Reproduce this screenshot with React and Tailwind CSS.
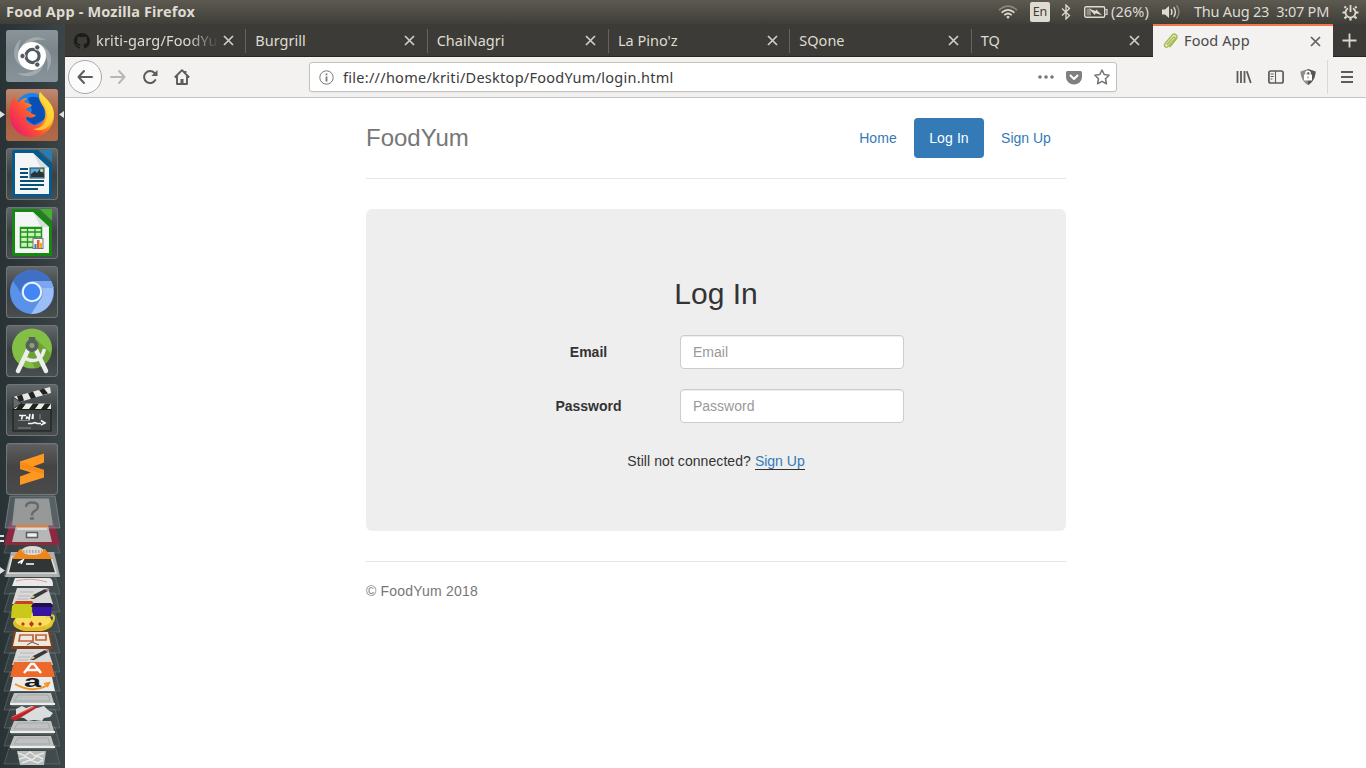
import React from "react";

const ui = "font-['Noto_Sans','Open_Sans',sans-serif]";

function CloseIcon({ className }) {
  return (
    <svg className={`h-[11px] w-[11px] shrink-0 ${className}`} viewBox="0 0 11 11" fill="none" stroke="currentColor" strokeWidth="1.7">
      <path d="M1 1l9 9M10 1l-9 9" />
    </svg>
  );
}

/* ---------- system bar ---------- */

function SystemBar() {
  return (
    <header className="flex h-6 shrink-0 items-center bg-linear-to-b from-[#5c5a50] to-[#3f3e39] text-[#dfdbd2]">
      <span className="ml-[6px] pb-[2px] whitespace-nowrap text-[14.5px] font-bold leading-[22px] tracking-[0.17px]">Food App - Mozilla Firefox</span>
      <div className="ml-auto flex h-6 items-center">
        <svg className="h-[18px] w-5" viewBox="0 0 20 18" fill="none" stroke="#dfdbd2" strokeWidth="1.7">
          <path d="M1 7.2Q10-.8 19 7.2" stroke="#8b887f" />
          <path d="M3.6 9.7Q10 4 16.4 9.7M6.3 12.2Q10 8.8 13.7 12.2" />
          <path d="M8.2 13.7Q10 12.2 11.8 13.7L10 16z" fill="#dfdbd2" stroke="none" />
        </svg>
        <span className="ml-3 flex h-5 w-5 items-center justify-center rounded-[2px] bg-[#dfdbd2] pt-px text-[12.5px] leading-none text-[#3c3b37]">En</span>
        <svg className="ml-[11px] h-4 w-[10px]" viewBox="0 0 10 16" fill="none" stroke="#dfdbd2" strokeWidth="1.3">
          <path d="M1 4.5l7.5 7L5 15V1l3.5 3.5L1 11.5" />
        </svg>
        <svg className="ml-[13px] h-3 w-6" viewBox="0 0 24 12" fill="none">
          <rect x=".7" y=".7" width="20" height="10.6" rx="1.5" stroke="#dfdbd2" strokeWidth="1.4" />
          <rect x="2.5" y="2.5" width="4.500" height="7" fill="#8f8c83" />
          <path d="M21.5 3.5H23v5h-1.500" stroke="#dfdbd2" strokeWidth="1.2" />
          <path d="M5 2.700l6.500 2.300.8-1.500L18 9.300l-6.300-2-1 1.600z" fill="#dfdbd2" />
        </svg>
        <span className="ml-[3px] w-[39px] pb-[2px] whitespace-nowrap text-[14.5px] leading-[22px] tracking-[0.1px]">(26%)</span>
        <svg className="ml-[11px] h-4 w-5" viewBox="0 0 20 16" fill="none" stroke="#dfdbd2" strokeWidth="1.4">
          <path d="M1 5.500h3L8 2v12L4 10.500H1z" fill="#dfdbd2" stroke="none" />
          <path d="M10 5.200Q12 8 10 10.800M12.700 3.200Q16 8 12.700 12.800" />
          <path d="M15.500 1.500Q20.500 8 15.500 14.500" stroke="#8b887f" />
        </svg>
        <span className="ml-[13px] w-[143px] pb-[2px] whitespace-pre text-[14.5px] leading-[22px] tracking-[-0.22px]">Thu Aug 23  3:07 PM</span>
        <svg className="mr-[7px] ml-[5px] h-[17px] w-[17px]" viewBox="0 0 17 17" fill="none" stroke="#dfdbd2">
          <path d="M6 4.200A5 5 0 1 0 11 4.200" strokeWidth="1.800" />
          <path d="M8.500 1v7" strokeWidth="1.800" />
          <path d="M3.900 3.900L2.500 2.500M13.100 3.900l1.400-1.400M3.500 8.500h-3M13.500 8.500h3M4.500 12.500l-2 2M12.500 12.500l2 2M8.500 13.500v3" strokeWidth="2.200" />
        </svg>
      </div>
    </header>
  );
}

/* ---------- launcher ---------- */

function UbuntuIcon() {
  return (
    <svg viewBox="0 0 52 52" className="h-full w-full">
      <defs>
        <linearGradient id="dash" x1="0" y1="0" x2="0" y2="1">
          <stop offset="0" stopColor="#8b9599" />
          <stop offset=".4" stopColor="#7b868c" />
          <stop offset="1" stopColor="#87939a" />
        </linearGradient>
      </defs>
      <rect width="52" height="52" rx="3" fill="url(#dash)" />
      <path d="M13 24C15 10 29 3 40 10 23 8 18 17 18 27zM21 39C6 34 4 18 15 9 9 25 15 32 24 36zM38 28C39 43 25 51 11 43 27 45 33 38 34 30zM28 13C44 15 50 29 41 42 44 26 37 20 28 18z" fill="#c0c7ca" opacity=".5" />
      <circle cx="26" cy="26" r="14" fill="#fff" />
      <circle cx="26.500" cy="26" r="6.600" fill="none" stroke="#505a5f" strokeWidth="3.200" />
      <g fill="#505a5f" stroke="#fff" strokeWidth="1">
        <circle cx="16.500" cy="26" r="2.700" />
        <circle cx="31.300" cy="17.400" r="2.700" />
        <circle cx="31.300" cy="34.600" r="2.700" />
      </g>
    </svg>
  );
}

function FirefoxIcon() {
  return (
    <svg viewBox="0 0 52 52" className="h-full w-full">
      <defs>
        <linearGradient id="fxBody" x1=".95" y1=".1" x2=".1" y2=".75">
          <stop offset="0" stopColor="#fff33c" />
          <stop offset=".35" stopColor="#ffa51c" />
          <stop offset=".6" stopColor="#ff5a2c" />
          <stop offset="1" stopColor="#f02660" />
        </linearGradient>
        <linearGradient id="fxTile" x1="0" y1="0" x2="0" y2="1">
          <stop offset="0" stopColor="#bf8a72" />
          <stop offset=".5" stopColor="#a9603f" />
          <stop offset="1" stopColor="#b06b4b" />
        </linearGradient>
      </defs>
      <rect width="52" height="52" rx="3" fill="url(#fxTile)" />
      <circle cx="26" cy="21" r="17" fill="#1a83ee" />
      <path d="M22 9Q33 5 38 14L39 30 28 36 20 30 26 22z" fill="#0a4fb5" />
      <path d="M34 3C31 9 35 14 38 19 42 27 37 36 29 36 23 36 19 32 20 27 24 30 28 29 30 26 26 26 24 22 20 21 20 18 24 18 26 17 26 15 21 14 18 13 19 11 21 10 21 9 17 9 14 11 13 13L10 12C9 10 9 9 10 7 4 12 3 20 4 28 5 40 14 48 26 48 39 48 48 38 48 26 48 16 42 12 34 3z" fill="url(#fxBody)" />
      <path d="M34 3C31 10 41 15 41 26 40 36 33 40 27 40 37 44 45 38 47.500 28 49 15 40 11 34 3z" fill="#ffdc3c" opacity=".75" />
    </svg>
  );
}

function DocumentIcon({ kind }) {
  const writer = kind === "writer";
  const edge = writer ? "#075a8d" : "#168710";
  const fold = writer ? "#287db5" : "#43b32f";
  return (
    <svg viewBox="0 0 52 52" className="h-full w-full">
      <path d="M8 2H32L46 16V49H8Q6 49 6 47V4Q6 2 8 2z" fill={edge} />
      <path d="M9 5H27L43 20V46H9z" fill="#f4f6f6" />
      <path d="M34 2H45Q46 2 46 3V14z" fill={fold} />
      <path d="M27 5l16 15h-8z" fill="#d9dddd" />
      {writer ? (
        <g>
          <path d="M14 21h8M14 25h8M14 29h8M14 33h24M14 37h24M14 41h18" stroke="#075077" strokeWidth="2" />
          <rect x="24" y="20" width="14" height="10" fill="#59aee0" stroke="#254356" />
          <path d="M25 29v-3l4-3 2 2 3-4 4 5v3z" fill="#27353b" />
          <circle cx="35.500" cy="22.500" r="1.500" fill="#f2d75b" />
        </g>
      ) : (
        <g>
          <rect x="14.500" y="20.500" width="21" height="20" fill="#cbf1bd" stroke="#209319" strokeWidth="1.500" />
          <path d="M14 21h22" stroke="#209319" strokeWidth="2" />
          <path d="M14 25h22M14 30h22M14 35h22M21.500 20v20M29 20v20" stroke="#209319" strokeWidth="1.300" />
          <rect x="27" y="31.500" width="10" height="10" fill="#f2f2f2" stroke="#777" />
          <path d="M28.500 37h2v4h-2z" fill="#2d81bd" />
          <path d="M31 33h2.500v8H31z" fill="#df6622" />
          <path d="M34 36h2v5h-2z" fill="#eaac25" />
        </g>
      )}
    </svg>
  );
}

function ChromiumIcon() {
  return (
    <svg viewBox="0 0 52 52" className="h-full w-full">
      <circle cx="26" cy="26" r="22" fill="#5b92e9" />
      <path d="M7 15A22 22 0 0 1 45 15H26Q15 16 15 27z" fill="#3f70c6" />
      <path d="M26 15H45C52 29 44 48 25 48L36 31Q39 18 26 15z" fill="#9cbef8" />
      <path d="M26 15H45l3 7H33z" fill="#7ca7ef" />
      <circle cx="26" cy="26" r="9.200" fill="#4285f4" stroke="#eef4ff" strokeWidth="2" />
    </svg>
  );
}

function AndroidStudioIcon() {
  return (
    <svg viewBox="0 0 52 52" className="h-full w-full">
      <circle cx="26" cy="23.500" r="20" fill="#83bf45" />
      <path d="M29 13l16.500 16Q41 42 29 43L20 27z" fill="#6ca235" />
      <path d="M18 33Q34 41 38.500 24" fill="none" stroke="#eceeed" strokeWidth="3.500" />
      <path d="M22 25L12 46M30 25l10 21" stroke="#eceeed" strokeWidth="4.500" strokeLinecap="round" />
      <circle cx="26" cy="20.500" r="4.500" fill="none" stroke="#56615d" strokeWidth="4" />
      <path d="M22.800 12h6.400v5h-6.400z" fill="#56615d" />
      <circle cx="26" cy="20.500" r="2.300" fill="#8fa07c" />
    </svg>
  );
}

function ClapperIcon() {
  return (
    <svg viewBox="0 0 52 52" className="h-full w-full">
      <path d="M7 13L44 3l1 6L10 19z" fill="#e7e7e3" />
      <path d="M11 12l5-1.500 2 6-5 1.500zM22 9l5-1.500 3 6-5 1.500zM33 6l5-1.500 4 5-5 1.500z" fill="#202322" />
      <path d="M7 19.500h38V25H7z" fill="#ecece7" />
      <path d="M14 19.500h6L16 25h-6zM27 19.500h6L29 25h-6zM39 19.500h6L41 25h-6z" fill="#202322" />
      <path d="M7 13l9 6-9 6z" fill="#656b6c" stroke="#2c3030" />
      <rect x="7" y="25.500" width="38" height="21.500" fill="#414545" stroke="#171919" />
      <path d="M13 31.500h7M16.500 31.500l-1 4M20 35l1-2 2 2 1-5-1 5M26 35l1-5v5M22 39.500h4l3-1 2 1h4M35 36.500l4 2.500-4 2" stroke="#f5f5f5" fill="none" strokeWidth="1.600" />
      <path d="M12 36.500h12M12 44h13M34 30v5" stroke="#858b8b" />
    </svg>
  );
}

function SublimeIcon() {
  return (
    <svg viewBox="0 0 52 52" className="h-full w-full">
      <defs>
        <linearGradient id="sublimeTile" x1="0" y1="0" x2="0" y2="1">
          <stop offset="0" stopColor="#5d5d5d" />
          <stop offset=".45" stopColor="#444" />
          <stop offset="1" stopColor="#4a4a4a" />
        </linearGradient>
      </defs>
      <rect x="2" y="2" width="48" height="48" rx="3" fill="url(#sublimeTile)" />
      <path d="M14 18.500L38 10.500v9L27 23.500l11 3.500v7.500L14 42v-8.500l11-4-11-3.500z" fill="#ff9820" />
      <path d="M14 18.500l13 5 11 3.500v4l-24-6z" fill="#f58c16" />
    </svg>
  );
}

const apps = [
  [UbuntuIcon], [FirefoxIcon], [DocumentIcon, "writer"], [DocumentIcon, "calc"],
  [ChromiumIcon], [AndroidStudioIcon], [ClapperIcon], [SublimeIcon],
];

function Disk({ y }) {
  return (
    <g transform={`translate(0 ${y})`}>
      <path d="M14 0h37l3 10H10z" fill="#bfc1c1" />
      <path d="M18 2h30l2 6H14z" fill="none" stroke="#a5a9a9" />
      <path d="M10 10h45v2H10z" fill="#eceeee" />
      <path d="M11 12h43v1.500H11z" fill="#5f6464" />
    </g>
  );
}

function Notes({ y }) {
  return (
    <g transform={`translate(0 ${y})`}>
      <path d="M17 0h31l5 16H12z" fill="#d8d8d8" />
      <path d="M20 4h14M18 8h12M17 11h11" stroke="#b7b7b7" />
      <path d="M30 11l3-4L45 1l3 2-14 8z" fill="#353b39" />
      <path d="M30 11l3-4 2 2z" fill="#dbc98d" />
      <path d="M45 1l3-1 2 2-3 1z" fill="#b67b9b" />
    </g>
  );
}

function FoldedStack() {
  const edges = [39, 62, 80, 98, 118, 139, 158, 177, 196, 214, 232, 250];
  return (
    <svg viewBox="0 0 65 272" className="block h-[272px] w-[65px]">
      <g fill="#828b8e" fillOpacity=".14" stroke="#8c9598" strokeOpacity=".35">
        {edges.map((y) => <path key={y} d={`M10 ${y}H55l5 19H4z`} />)}
      </g>
      <path d="M10 26l-6 24h56l-6-24z" fill="#8c2940" />
      <path d="M10 1h45l5 32H5z" fill="#768085" fillOpacity=".5" stroke="#919a9e" strokeOpacity=".6" />
      <path d="M15 3.500h34l4 27H12z" fill="#979999" />
      <path d="M26 12q0-4.500 6-4.500t6 4q0 3-4 5-2 1-2 4M30 23.500h4" fill="none" stroke="#666969" strokeWidth="2.300" />
      <path d="M16 30.500h32l4 16.500H12z" fill="#b5b6b6" />
      <path d="M16 31h32" stroke="#ea7d35" strokeWidth="2" />
      <path d="M17 33h30v2H17z" fill="#d8d9d8" />
      <rect x="26.500" y="37.500" width="11" height="5" fill="#eee" stroke="#585b5c" strokeWidth="1.500" />
      <path d="M11 57h43l6 25H5z" fill="#aeb0af" />
      <path d="M12 62h39l5 16H8z" fill="#323536" stroke="#e0e0df" strokeWidth="1.500" />
      <path d="M18 68l5-3-2 4M26 69h8" fill="none" stroke="#fff" strokeWidth="1.600" />
      <path d="M20 54h25l8 10H12z" fill="#ee8619" />
      <ellipse cx="32.500" cy="55.500" rx="10.500" ry="4.500" fill="#dedbd6" />
      <path d="M23 56.500h19" stroke="#aaa" strokeWidth="3" strokeDasharray="1.500 1.500" />
      <path d="M15 83h34q4 0 4 8H12z" fill="#e9e9e9" />
      <path d="M16 86q15-4 31 1" fill="none" stroke="#d79da1" />
      <Notes y={93} />
      <ellipse cx="33" cy="128" rx="20" ry="9" fill="#dfbd24" />
      <ellipse cx="33" cy="125" rx="18" ry="7.500" fill="#f6df5a" />
      <path d="M46 122q8-4 8 1 0 6-9 9" fill="none" stroke="#e6c936" strokeWidth="2" />
      <path d="M12 111l2-2h19l-2 14H11z" fill="#c9c91a" />
      <path d="M32 111h20l-1 10H33z" fill="#3415a4" />
      <path d="M33 108h18l2 4H31z" fill="#20104a" />
      <path d="M14 109l2-3h16l2 3z" fill="#c94123" />
      <path d="M29 129l2.500-3 2.500 3-2.500 3zM21 129l2-2 2 2-2 2zM38 129l2-2 2 2-2 2z" fill="#c52e2e" />
      <path d="M14 136h36l3 18H11z" fill="#843f1d" />
      <path d="M16 137h32l3 14H13z" fill="#eee8dd" />
      <path d="M20 140h13v6H19zM36 140h10v5H36z" fill="none" stroke="#bf6037" strokeWidth="1.700" />
      <path d="M27 150l5-3 7 3" fill="none" stroke="#515653" />
      <Notes y={154} />
      <path d="M14 167h37l4 15H10z" fill="#ec692a" />
      <path d="M24 178l7-9h3l7 9M27 175h12" fill="none" stroke="#fff" strokeWidth="2.400" />
      <path d="M13 182h39l3 14H10z" fill="#ececec" />
      <text x="24" y="192" className="font-['Liberation_Sans',sans-serif] text-[16px] font-bold" textLength="17" lengthAdjust="spacingAndGlyphs" fill="#17191a">a</text>
      <path d="M15 189Q32 199 48 190M44 189l5-1-2 4" fill="none" stroke="#f59420" strokeWidth="2" />
      <Disk y={198} />
      <Disk y={226} />
      <path d="M16 214l6-3 4 2 6-2 5 2 7-2 4 4 5 3-3 4-6 1-2 3-8-1-6 1-4-3-8-1z" fill="#dadddd" />
      <path d="M10 223L34 211l4 1-23 14z" fill="#bd2425" />
      <path d="M12 222l22-10" stroke="#eb655d" />
      <Disk y={241} />
      <path d="M17 256h29l-2 14H20z" fill="#b9bdbb" />
      <path d="M18 258l7 3 5-4 5 4 9-3M19 264l7-2 6 3 5-4 6 3M22 268l8-3 8 3 5-3" fill="none" stroke="#e6e8e6" strokeWidth="1.500" />
    </svg>
  );
}

function Launcher() {
  return (
    <aside className="relative flex w-[65px] shrink-0 flex-col overflow-hidden bg-linear-to-r from-[#293235] via-[#303a3d] to-[#3c4649] pt-[6px]">
      <div className="flex flex-col items-start gap-[7px] pl-[6px]">
        {apps.map(([Icon, kind], i) => (
          <div key={i} className="relative h-[52px] w-[52px] rounded-[4px] bg-linear-to-b from-[#63686a] via-[#3b4042] to-[#494f51] shadow-[inset_0_0_0_1px_#6f7678]">
            <Icon kind={kind} />
          </div>
        ))}
      </div>
      <FoldedStack />
      <svg className="absolute top-0 left-0 h-[744px] w-[65px]" viewBox="0 0 65 744" fill="#e0e0df">
        <path d="M0 87l5 3.500L0 94zM64 87l-5 3.500 5 3.500zM0 543l5 3.500L0 550z" />
        <path d="M0 511h4v2H0zM0 516h4v2H0z" />
      </svg>
    </aside>
  );
}

/* ---------- browser ---------- */

const tabs = [
  { title: "kriti-garg/FoodYu", github: true },
  { title: "Burgrill" },
  { title: "ChaiNagri" },
  { title: "La Pino'z" },
  { title: "SQone" },
  { title: "TQ" },
];

function TabStrip() {
  return (
    <div className="flex h-[33px] shrink-0 border-b border-[#272622] bg-[#3c3b37] text-[14.5px] text-[#dfdbd2]">
      <div className="grid w-[1088px] grid-cols-6">
        {tabs.map((t, i) => (
          <div key={t.title} className="relative flex min-w-0 items-center pt-px pr-[12.5px] pl-[9px]">
            {t.github && (
              <svg className="mr-[6px] h-4 w-4 shrink-0" viewBox="0 0 16 16" fill="#1b1b1a">
                <path d="M8 0C3.580 0 0 3.580 0 8c0 3.540 2.290 6.530 5.470 7.590.4.070.55-.17.55-.38v-1.490c-2.010.37-2.530-.49-2.690-.94-.09-.23-.48-.94-.82-1.130-.28-.15-.68-.52-.01-.53.63-.01 1.080.58 1.230.82.72 1.210 1.870.87 2.330.66.07-.52.28-.87.51-1.070-1.780-.2-3.640-.89-3.640-3.950 0-.87.31-1.590.82-2.150-.08-.2-.36-1.020.08-2.120 0 0 .67-.21 2.200.82a7.500 7.500 0 0 1 4 0c1.530-1.040 2.200-.82 2.200-.82.44 1.100.16 1.920.08 2.120.51.56.82 1.270.82 2.150 0 3.070-1.870 3.750-3.650 3.950.29.25.54.73.54 1.480v2.200c0 .21.15.46.55.38A8 8 0 0 0 8 0z" />
              </svg>
            )}
            <span className={`flex-1 pb-[2px] whitespace-nowrap leading-5 ${t.github ? "tracking-[0.15px] mask-r-from-75%" : ""}`}>{t.title}</span>
            <CloseIcon className="ml-1 text-[#d2cec5]" />
            {i < 5 && <i className="absolute top-[5px] right-0 h-6 w-px bg-[#66645f]" />}
          </div>
        ))}
      </div>
      <div className="-mb-px flex h-[33px] w-[180px] items-center border-t-2 border-[#f07746] bg-[#f3f2f1] pr-[12px] pb-[1px] pl-[9px] text-[#4b4a49]">
        <svg className="mr-[6px] h-4 w-4" viewBox="0 0 16 16" fill="none" stroke="#a5bd4f" strokeWidth="1.500" strokeLinecap="round">
          <path d="M5.200 11.500L11 4.500c1-1.300 2.700 0 1.700 1.400L6.500 13c-2.200 2.500-5.400.2-3.300-2.500L9.800 2.500c2.800-3.200 6.800.2 4.400 3.500L8 13.700" />
        </svg>
        <span className="flex-1 pb-[2px] leading-5 tracking-[0.1px]">Food App</span>
        <CloseIcon className="text-[#626160]" />
      </div>
      <div className="flex flex-1 items-center justify-center">
        <svg className="h-[15px] w-[15px]" viewBox="0 0 15 15" stroke="#dad6cd" strokeWidth="1.800"><path d="M7.500.5v14M.5 7.500h14" /></svg>
      </div>
    </div>
  );
}

function Toolbar() {
  return (
    <div className="flex h-[41px] shrink-0 items-center border-b border-[#c5c4c2] bg-[#f3f2f1] pl-[3px] text-[#5c5c5b]">
      <div className="flex h-[34px] w-[34px] items-center justify-center rounded-full border border-[#aaa9a8] bg-[#fbfbfb]">
        <svg className="h-4 w-4" viewBox="0 0 16 16" fill="none" stroke="currentColor" strokeWidth="2" strokeLinecap="round" strokeLinejoin="round"><path d="M15 8H1.500M7 2L1.500 8 7 14" /></svg>
      </div>
      <svg className="ml-2 h-4 w-4 text-[#b8b7b6]" viewBox="0 0 16 16" fill="none" stroke="currentColor" strokeWidth="2" strokeLinecap="round" strokeLinejoin="round"><path d="M1 8h13.500M9 2l5.500 6L9 14" /></svg>
      <svg className="ml-4 h-4 w-4" viewBox="0 0 16 16" fill="none" stroke="currentColor" strokeWidth="2" strokeLinecap="round"><path d="M13.300 11A6 6 0 1 1 12.500 4" /><path d="M15.500 1v6H9.300z" fill="currentColor" stroke="none" /></svg>
      <svg className="ml-4 h-4 w-4" viewBox="0 0 16 16" fill="none" stroke="currentColor" strokeWidth="1.900" strokeLinejoin="round"><path d="M.8 8.500L8 1.200l7.200 7.300M3 7v8h10V7M11.500 2v3" /><path d="M6.500 15v-5h3v5z" fill="currentColor" stroke="none" /></svg>
      <div className="ml-[119px] flex h-[30px] w-[808px] items-center rounded-[3px] border border-[#c3c1be] bg-white pr-[6px] pl-[9px] shadow-[0_1px_2px_#0000000d]">
        <svg className="h-[15px] w-[15px]" viewBox="0 0 15 15" fill="none" stroke="#797979"><circle cx="7.500" cy="7.500" r="6.700" strokeWidth="1" /><path d="M7.500 6.500v5M7.500 3.500v1.700" strokeWidth="1.800" /></svg>
        <span className="ml-[9px] flex-1 pb-px whitespace-nowrap text-[14.5px] leading-5 tracking-[0.27px] text-[#3b3b3a]">file:///home/kriti/Desktop/FoodYum/login.html</span>
        <svg className="h-1 w-4" viewBox="0 0 16 4" fill="#777"><circle cx="2" cy="2" r="1.800" /><circle cx="8" cy="2" r="1.800" /><circle cx="14" cy="2" r="1.800" /></svg>
        <svg className="ml-3 h-[15px] w-4" viewBox="0 0 16 15"><path d="M1.500 1h13Q16 1 16 2.500V7A8 7.500 0 0 1 0 7V2.500Q0 1 1.500 1z" fill="#7f7f7f" /><path d="M4.500 5.500L8 9l3.500-3.500" fill="none" stroke="#fff" strokeWidth="2" strokeLinecap="round" strokeLinejoin="round" /></svg>
        <svg className="ml-3 h-4 w-4" viewBox="0 0 16 16" fill="none" stroke="#777" strokeWidth="1.600" strokeLinejoin="round"><path d="M8 1l2.200 4.500 4.900.7-3.600 3.500.9 5L8 12.400l-4.400 2.300.9-5L.9 6.200l4.900-.7z" /></svg>
      </div>
      <svg className="ml-[119px] h-4 w-4" viewBox="0 0 16 16" fill="none" stroke="currentColor" strokeWidth="1.800"><path d="M1.500 2v12M5 2v12M8.500 2v12M10.800 2.200l4 11.800" /></svg>
      <svg className="ml-4 h-4 w-4" viewBox="0 0 16 16" fill="none" stroke="currentColor" strokeWidth="1.700"><rect x=".9" y="2" width="14.200" height="12" rx="1.800" /><path d="M7.500 2v12M2.500 5h3.200M2.500 7.500h3.200M2.500 10h2" strokeWidth="1.100" /></svg>
      <svg className="ml-4 h-4 w-4" viewBox="0 0 16 16"><path d="M8 0l7.500 2.500C15.500 8.500 12.500 13.500 8 16 3.500 13.500.5 8.500.5 2.500z" fill="#8d8d8d" /><path d="M8 0l7.500 2.500C15.500 8.500 12.500 13.500 8 16z" fill="#555" /><rect x="4" y="5.500" width="8" height="6" rx=".5" fill="#fff" /><path d="M5.800 6.500V4.500a2.200 2.200 0 0 1 4.400 0v2" fill="none" stroke="#fff" strokeWidth="1.400" /><path d="M8 7.500v2" stroke="#777" /></svg>
      <i className="ml-[11px] h-[34px] w-px bg-[#dad9d7]" />
      <svg className="ml-[13px] h-3 w-3" viewBox="0 0 12 12" stroke="currentColor" strokeWidth="1.800"><path d="M0 1h12M0 6h12M0 11h12" /></svg>
    </div>
  );
}

function Field({ label, type, width }) {
  return (
    <div className="flex h-[34px] items-center">
      <label className={`shrink-0 text-center font-bold ${width}`}>{label}</label>
      <input type={type} placeholder={label} className="ml-auto h-[34px] w-[224px] rounded-[4px] border border-[#ccc] bg-white px-3 py-[6px] text-[14px] leading-5 shadow-[inset_0_1px_1px_rgba(0,0,0,.075)] outline-none placeholder:text-[#999]" />
    </div>
  );
}

function LoginPage() {
  return (
    <main className="flex-1 overflow-hidden bg-white pt-5 pl-[301px] font-['Liberation_Sans',Arial,sans-serif] text-[14px] leading-5 text-[#333]">
      <div className="w-[700px]">
        <div className="flex h-[61px] items-start justify-between border-b border-[#e5e5e5]">
          <h3 className="text-[24px] leading-10 text-[#777]">FoodYum</h3>
          <nav className="flex gap-[2px] text-[#337ab7]">
            <a className="w-[68px] rounded-[4px] py-[10px] text-center tracking-[0.1px]">Home</a>
            <a className="w-[70px] rounded-[4px] bg-[#337ab7] py-[10px] text-center tracking-[0.1px] text-white">Log In</a>
            <a className="w-20 rounded-[4px] py-[10px] text-center">Sign Up</a>
          </nav>
        </div>
        <section className="mt-[30px] h-[322px] rounded-[6px] bg-[#eee] pt-[68px]">
          <h2 className="text-center text-[30px] leading-[33px]">Log In</h2>
          <form className="mt-[25px] ml-[164px] flex w-[374px] flex-col gap-5">
            <Field label="Email" type="email" width="w-[117px]" />
            <Field label="Password" type="password" width="w-[117px]" />
          </form>
          <p className="mt-7 text-center tracking-[0.07px]">Still not connected? <span className="border-b border-[#333] leading-none tracking-normal text-[#337ab7]">Sign Up</span></p>
        </section>
        <footer className="mt-[30px] border-t border-[#e5e5e5] pt-[19px] tracking-[0.2px] text-[#777]">© FoodYum 2018</footer>
      </div>
    </main>
  );
}

export default function App() {
  return (
    <div className={`flex h-screen flex-col overflow-hidden bg-white ${ui}`}>
      <SystemBar />
      <div className="flex min-h-0 flex-1">
        <Launcher />
        <div className="flex min-w-0 flex-1 flex-col">
          <TabStrip />
          <Toolbar />
          <LoginPage />
        </div>
      </div>
    </div>
  );
}
